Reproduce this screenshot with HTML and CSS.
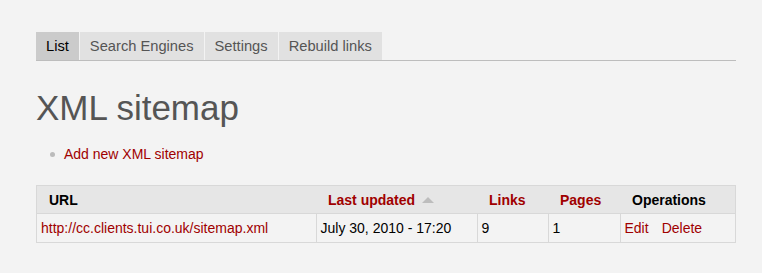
FILE: index.html
```html
<!DOCTYPE html>
<html>
<head>
<meta charset="utf-8">
<link rel="stylesheet" href="styles.css">
</head>
<body>
<div class="page">
  <ul class="tabs">
    <li class="tab active">List</li>
    <li class="tab">Search Engines</li>
    <li class="tab">Settings</li>
    <li class="tab">Rebuild links</li>
  </ul>
  <h1 class="title">XML sitemap</h1>
  <ul class="actions">
    <li><a href="#">Add new XML sitemap</a></li>
  </ul>
  <table class="grid">
    <thead>
      <tr>
        <th class="c-url">URL</th>
        <th class="c-date sort"><a href="#">Last updated</a><span class="arrow"></span></th>
        <th class="c-links sort"><a href="#">Links</a></th>
        <th class="c-pages sort"><a href="#">Pages</a></th>
        <th class="c-ops">Operations</th>
      </tr>
    </thead>
    <tbody>
      <tr>
        <td><a href="#">http://cc.clients.tui.co.uk/sitemap.xml</a></td>
        <td>July 30, 2010 - 17:20</td>
        <td>9</td>
        <td>1</td>
        <td class="ops"><a href="#">Edit</a><a href="#">Delete</a></td>
      </tr>
    </tbody>
  </table>
</div>
</body>
</html>
```
FILE: styles.css
```css
html, body {
  margin: 0;
  padding: 0;
  background: #f3f3f3;
}
body {
  font-family: "Liberation Sans", Arial, sans-serif;
  font-size: 14px;
  color: #000;
}
.page {
  padding: 32px 26px 0 36px;
}
a {
  color: #a00000;
  text-decoration: none;
}
.tabs {
  list-style: none;
  margin: 0;
  padding: 0;
  display: flex;
  border-bottom: 1px solid #bdbdbd;
}
.tab {
  height: 28px;
  line-height: 28px;
  padding: 0 10px;
  font-size: 14.7px;
  color: #555;
  background: #e1e1e1;
  margin-right: 1px;
}
.tab.active {
  background: #cbcbcb;
  color: #000;
}
.title {
  margin: 26px 0 0 0;
  font-size: 35px;
  font-weight: normal;
  line-height: 42px;
  color: #555;
}
.actions {
  margin: 16px 0 0 0;
  padding: 0 0 0 28px;
  list-style: none;
}
.actions li {
  position: relative;
  line-height: 18px;
}
.actions li::before {
  content: "";
  position: absolute;
  left: -14px;
  top: 7px;
  width: 5px;
  height: 5px;
  border-radius: 50%;
  background: #bbb;
}
.grid {
  margin-top: 22px;
  width: 700px;
  border-collapse: collapse;
  border: 1px solid #d8d8d8;
}
.grid th {
  background: #e6e6e6;
  height: 27px;
  padding: 0 0 0 12px;
  text-align: left;
  font-weight: bold;
  border-bottom: 1px solid #d8d8d8;
}
.grid td {
  height: 28px;
  padding: 0 0 0 4px;
  border-left: 1px solid #d8d8d8;
  background: #f3f3f3;
}
.grid td:first-child {
  border-left: none;
}
.c-url { width: 267px; }
.c-date { width: 149px; }
.c-links { width: 59px; }
.c-pages { width: 60px; }
.arrow {
  display: inline-block;
  margin-left: 7px;
  width: 0;
  height: 0;
  border-left: 6px solid transparent;
  border-right: 6px solid transparent;
  border-bottom: 6px solid #bdbdbd;
  vertical-align: 2px;
}
.ops a {
  margin-right: 13px;
}
```
